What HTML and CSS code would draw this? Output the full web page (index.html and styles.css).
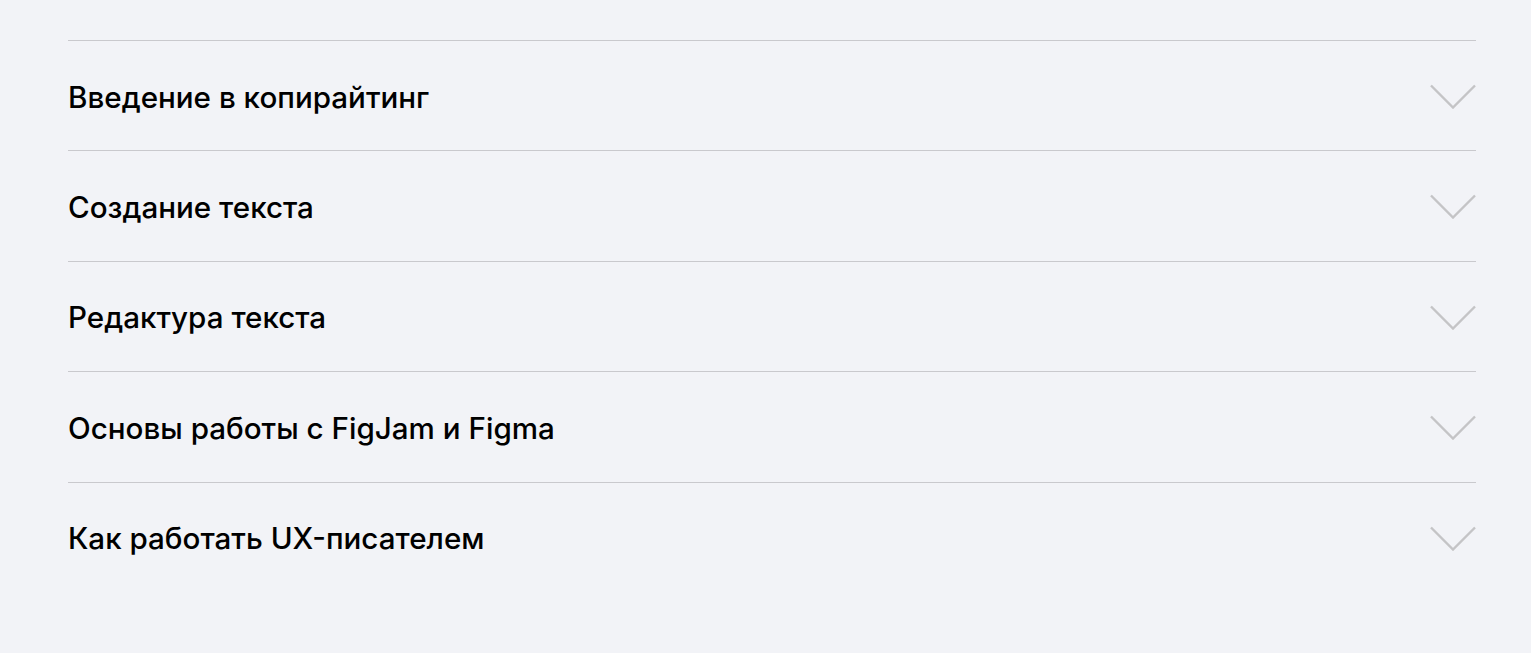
FILE: index.html
```html
<!DOCTYPE html>
<html lang="ru">
<head>
<meta charset="utf-8">
<link rel="stylesheet" href="styles.css">
</head>
<body>
<section class="faq">
  <div class="item"><span class="title">Введение в копирайтинг</span><svg class="chev" viewBox="0 0 46 25"><path d="M1 1.5 L23 23.5 L45 1.5"/></svg></div>
  <div class="item"><span class="title">Создание текста</span><svg class="chev" viewBox="0 0 46 25"><path d="M1 1.5 L23 23.5 L45 1.5"/></svg></div>
  <div class="item"><span class="title">Редактура текста</span><svg class="chev" viewBox="0 0 46 25"><path d="M1 1.5 L23 23.5 L45 1.5"/></svg></div>
  <div class="item"><span class="title">Основы работы с FigJam и Figma</span><svg class="chev" viewBox="0 0 46 25"><path d="M1 1.5 L23 23.5 L45 1.5"/></svg></div>
  <div class="item last"><span class="title">Как работать UX-писателем</span><svg class="chev" viewBox="0 0 46 25"><path d="M1 1.5 L23 23.5 L45 1.5"/></svg></div>
</section>
</body>
</html>
```

FILE: styles.css
```css
html, body {
  margin: 0;
  padding: 0;
  background: #f2f3f7;
  height: 100%;
}
.faq {
  padding: 40px 55px 0 68px;
  display: flex;
  flex-direction: column;
}
.item {
  border-top: 1px solid #c9c9cd;
  height: 110px;
  padding-top: 2px;
  display: flex;
  align-items: center;
  justify-content: space-between;
  box-sizing: border-box;
}
.item + .item { height: 110.5px; }
.title {
  font-family: Inter, "Noto Sans", sans-serif;
  font-size: 29.6px;
  font-weight: 500;
  color: #000;
  letter-spacing: 0;
}
.chev {
  width: 46px;
  height: 25px;
  fill: none;
  stroke: #c4c4c6;
  stroke-width: 2.4;
}
```
